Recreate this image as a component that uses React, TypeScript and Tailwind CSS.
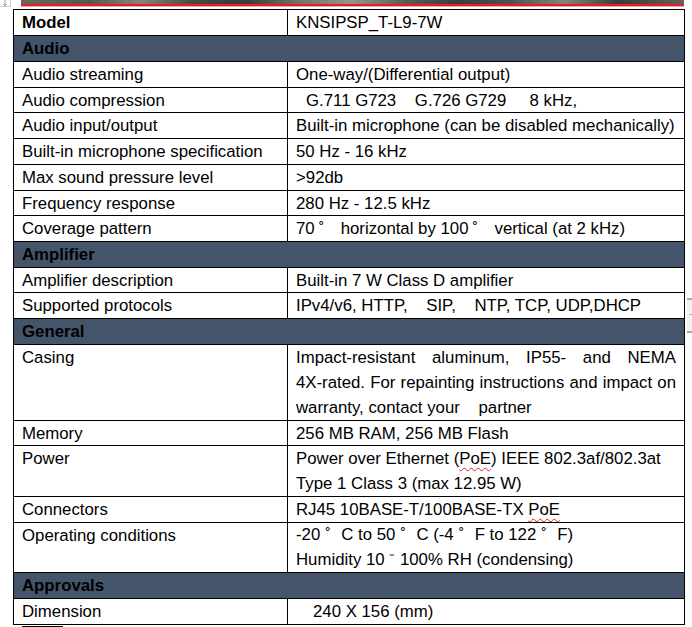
import React from "react";

type Row =
  | { kind: "head"; label: string; h: string }
  | { kind: "row"; label: string; value: React.ReactNode; h: string; bold?: boolean };

function Deg({ w }: { w: "a" | "b" }) {
  return (
    <span className={`inline-block ${w === "a" ? "w-[26px] pl-[4px]" : "w-[21px] pl-[5px]"} text-left`}>˚</span>
  );
}

const rows: Row[] = [
  { kind: "row", label: "Model", value: "KNSIPSP_T-L9-7W", h: "h-[25px]", bold: true },
  { kind: "head", label: "Audio", h: "h-[26px]" },
  { kind: "row", label: "Audio streaming", value: "One-way/(Differential output)", h: "h-[26px]" },
  {
    kind: "row",
    label: "Audio compression",
    value: <span className="ml-[10px] whitespace-pre">{"G.711 G723    G.726 G729     8 kHz,"}</span>,
    h: "h-[25px]",
  },
  { kind: "row", label: "Audio input/output", value: "Built-in microphone (can be disabled mechanically)", h: "h-[26px]" },
  { kind: "row", label: "Built-in microphone specification", value: "50 Hz - 16 kHz", h: "h-[26px]" },
  { kind: "row", label: "Max sound pressure level", value: ">92db", h: "h-[26px]" },
  { kind: "row", label: "Frequency response", value: "280 Hz - 12.5 kHz", h: "h-[25px]" },
  {
    kind: "row",
    label: "Coverage pattern",
    value: (
      <span className="whitespace-pre">
        70<Deg w="a" />horizontal by 100<Deg w="a" />vertical (at 2 kHz)
      </span>
    ),
    h: "h-[26px]",
  },
  { kind: "head", label: "Amplifier", h: "h-[26px]" },
  { kind: "row", label: "Amplifier description", value: "Built-in 7 W Class D amplifier", h: "h-[25px]" },
  {
    kind: "row",
    label: "Supported protocols",
    value: <span className="whitespace-pre">{"IPv4/v6, HTTP,    SIP,    NTP, TCP, UDP,DHCP"}</span>,
    h: "h-[26px]",
  },
  { kind: "head", label: "General", h: "h-[26px]" },
  {
    kind: "row",
    label: "Casing",
    value: (
      <div className="w-[380px]">
        <div className="text-justify [text-align-last:justify]">Impact-resistant aluminum, IP55- and NEMA</div>
        <div className="text-justify [text-align-last:justify]">4X-rated. For repainting instructions and impact on</div>
        <div className="whitespace-pre">{"warranty, contact your    partner"}</div>
      </div>
    ),
    h: "h-[76px]",
  },
  { kind: "row", label: "Memory", value: "256 MB RAM, 256 MB Flash", h: "h-[25px]" },
  {
    kind: "row",
    label: "Power",
    value: (
      <div>
        <div className="whitespace-nowrap">
          Power over Ethernet (
          <span className="underline decoration-wavy decoration-[#e02020] decoration-1 underline-offset-[3px]">PoE</span>
          ) IEEE 802.3af/802.3at
        </div>
        <div>Type 1 Class 3 (max 12.95 W)</div>
      </div>
    ),
    h: "h-[51px]",
  },
  {
    kind: "row",
    label: "Connectors",
    value: (
      <span>
        RJ45 10BASE-T/100BASE-TX{" "}
        <span className="underline decoration-wavy decoration-[#e02020] decoration-1 underline-offset-[3px]">PoE</span>
      </span>
    ),
    h: "h-[26px]",
  },
  {
    kind: "row",
    label: "Operating conditions",
    value: (
      <div className="leading-[24.5px]">
        <div className="whitespace-pre">
          -20<Deg w="b" />C to 50<Deg w="b" />C (-4<Deg w="b" />F to 122<Deg w="b" />F)
        </div>
        <div className="whitespace-pre">{"Humidity 10 ⁻ 100% RH (condensing)"}</div>
      </div>
    ),
    h: "h-[50px]",
  },
  { kind: "head", label: "Approvals", h: "h-[26px]" },
  {
    kind: "row",
    label: "Dimension",
    value: <span className="ml-[17px]">240 X 156 (mm)</span>,
    h: "h-[26px]",
  },
];

export default function App() {
  return (
    <div
      className="relative w-[692px] h-[627px] overflow-hidden bg-white text-black text-[16.8px]"
      style={{ fontFamily: '"Liberation Sans", Arial, sans-serif' }}
    >
      {/* anchor handle top-left */}
      <div className="absolute left-0 top-0 w-[11px] h-[7px] border-r border-b border-[#d0d0d0] bg-white">
        <svg width="10" height="7" viewBox="0 0 10 7" className="block">
          <path d="M5 0 V6 M3 4 L5 6 L7 4" stroke="#9a9a9a" strokeWidth="1" fill="none" />
        </svg>
      </div>

      {/* photo strip */}
      <div className="ml-[21px] w-[663px]">
        <div className="h-[4px] bg-[linear-gradient(90deg,#6e665c_0%,#5a544c_10%,#8c8274_18%,#4a4640_26%,#3c3a36_34%,#7a7268_42%,#9a9288_50%,#5e5a54_58%,#3a3c38_66%,#4e5450_74%,#8a8276_82%,#3e3a36_90%,#6a5e56_100%)]" />
        <div className="h-[2px] bg-[#d8232e]" />
        <div className="h-[1px] bg-[#f0a0a6]" />
      </div>

      {/* table */}
      <div className="mt-[2px] ml-[13px] w-[672px] border border-black">
        {rows.map((r, i) =>
          r.kind === "head" ? (
            <div
              key={i}
              className={`${r.h} ${i > 0 ? "border-t border-black" : ""} bg-[#44546a] px-2 font-bold leading-[25px]`}
            >
              {r.label}
            </div>
          ) : (
            <div
              key={i}
              className={`${r.h} ${i > 0 ? "border-t border-black" : ""} grid grid-cols-[274px_396px] leading-[25px]`}
            >
              <div className={`border-r border-black px-2 whitespace-nowrap ${r.bold ? "font-bold" : ""}`}>{r.label}</div>
              <div className="px-2 overflow-hidden">{r.value}</div>
            </div>
          )
        )}
      </div>

      {/* small line below table */}
      <div className="mt-[1px] ml-[22px] w-[41px] h-px bg-black" />

      {/* scrollbar fragment on right */}
      <div className="absolute left-[687px] top-[298px] w-[5px] h-[35px] bg-[#f2f2f2] border-t-2 border-b-2 border-[#a8a8a8]">
        <div className="mt-[14px] ml-[2px] w-[3px] h-px bg-[#b0b0b0]" />
      </div>
    </div>
  );
}
